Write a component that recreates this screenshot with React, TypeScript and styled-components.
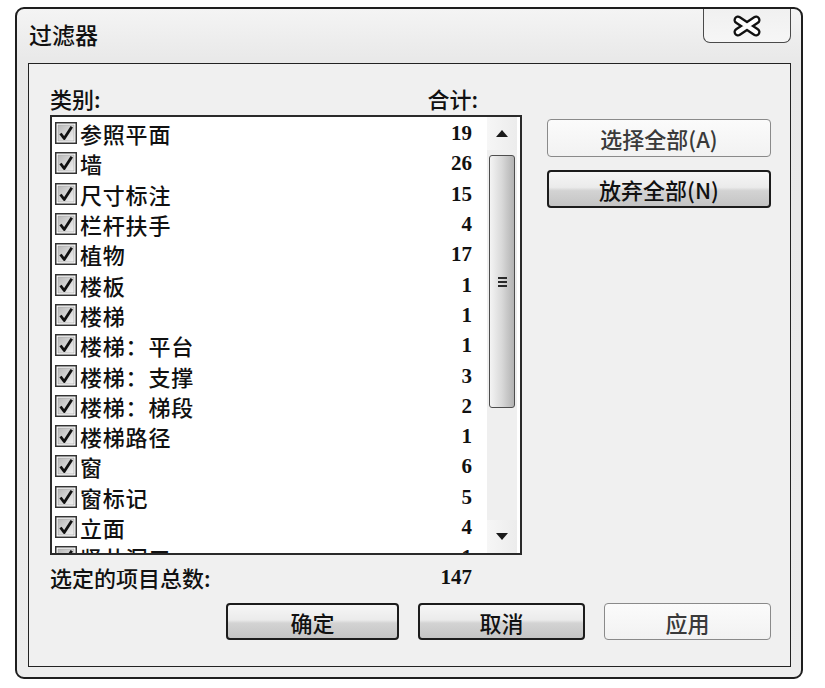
import React from 'react'
import styled, { createGlobalStyle } from 'styled-components'

const GlobalStyle = createGlobalStyle`
  html, body {
    margin: 0;
    padding: 0;
    background: #ffffff;
  }
  body {
    font-family: "Noto Sans CJK SC", "Noto Sans", sans-serif;
    color: #111;
  }
`

const Page = styled.div`
  width: 825px;
  height: 688px;
  box-sizing: border-box;
  padding: 7px 0 0 15px;
`

const Window = styled.div`
  width: 788px;
  height: 672px;
  box-sizing: border-box;
  border: 2px solid #1e1e1e;
  border-radius: 9px;
  background: linear-gradient(#f4f4f4, #e8e8e8 54px, #ececec);
  display: flex;
  flex-direction: column;
`

const TitleBar = styled.div`
  height: 54px;
  flex-shrink: 0;
  display: flex;
  justify-content: space-between;
  align-items: flex-start;
  padding: 0 10px 0 12px;
`

const Title = styled.div`
  margin-top: 10px;
  font-size: 23px;
  line-height: 30px;
  font-weight: 500;
`

const CloseButton = styled.div`
  width: 88px;
  height: 34px;
  box-sizing: border-box;
  border: 1.5px solid #4a4a4a;
  border-top: none;
  border-radius: 0 0 7px 7px;
  background: linear-gradient(#f0f0f0, #f6f6f6);
  display: flex;
  align-items: center;
  justify-content: center;
`

const Panel = styled.div`
  flex: 1;
  margin: 0 10px 10px 11px;
  border: 1.5px solid #222;
  background: #f0f0f0;
  padding: 16px 19px 26px 21px;
  display: flex;
  flex-direction: column;
`

const Main = styled.div`
  display: grid;
  grid-template-columns: 472px 224px;
  justify-content: space-between;
`

const LeftCol = styled.div`
  display: flex;
  flex-direction: column;
`

const Header = styled.div`
  height: 35px;
  display: flex;
  align-items: center;
  justify-content: space-between;
  padding-right: 44px;
  font-size: 22px;
  font-weight: 500;
`

const ListBox = styled.div`
  height: 440px;
  box-sizing: border-box;
  border: 2px solid #2a2a2a;
  background: #fff;
  display: flex;
`

const Rows = styled.div`
  flex: 1;
  overflow: hidden;
  padding: 1px 0 0 3px;
`

const Row = styled.div`
  height: 30.3px;
  display: flex;
  align-items: center;
  gap: 3px;
`

const Label = styled.span`
  flex: 1;
  font-size: 22px;
  letter-spacing: 0.8px;
  line-height: 28px;
  font-weight: 500;
  white-space: nowrap;
`

const Count = styled.span`
  font-family: "Liberation Serif", "Times New Roman", serif;
  font-weight: 700;
  font-size: 21px;
  line-height: 28px;
  padding-right: 15px;
`

const Scrollbar = styled.div`
  width: 30px;
  margin-right: 3px;
  background: #efefef;
  display: flex;
  flex-direction: column;
`

const ArrowButton = styled.div`
  height: 33px;
  display: flex;
  align-items: center;
  justify-content: center;
  background: linear-gradient(90deg, #f6f6f6, #ececec);
`

const Thumb = styled.div`
  margin: 5px 2px 0;
  height: 253px;
  box-sizing: border-box;
  border: 1.5px solid #4e4e4e;
  border-radius: 3px;
  background: linear-gradient(90deg, #f4f4f4, #d8d8d8 50%, #b2b2b2);
  display: flex;
  flex-direction: column;
  align-items: center;
  justify-content: center;
  gap: 2px;
`

const Grip = styled.div`
  width: 9px;
  height: 2px;
  background: #2a2a2a;
`

const Track = styled.div`
  flex: 1;
`

const Footer = styled.div`
  height: 44px;
  display: flex;
  align-items: center;
  justify-content: space-between;
  padding-right: 50px;
  font-size: 22px;
  font-weight: 500;
`

const Total = styled.span`
  font-family: "Liberation Serif", "Times New Roman", serif;
  font-weight: 700;
  font-size: 21px;
`

const RightCol = styled.div`
  padding-top: 39px;
  display: flex;
  flex-direction: column;
  gap: 13px;
`

const Button = styled.div<{ $primary?: boolean; $w?: number; $h?: number }>`
  width: ${(p) => p.$w ?? 224}px;
  height: ${(p) => p.$h ?? 38}px;
  box-sizing: border-box;
  border-radius: 4px;
  display: flex;
  align-items: center;
  justify-content: center;
  font-size: 22px;
  font-weight: 500;
  border: ${(p) => (p.$primary ? '2px solid #1c1c1c' : '1.5px solid #8a8a8a')};
  color: ${(p) => (p.$primary ? '#111' : '#3a3a3a')};
  background: ${(p) =>
    p.$primary
      ? 'linear-gradient(#f6f6f6 0%, #ebebeb 45%, #d3d3d3 55%, #c4c4c4 100%)'
      : 'linear-gradient(#fbfbfb, #f2f2f2)'};
`

const ButtonRow = styled.div`
  margin-top: 4px;
  display: flex;
  justify-content: flex-end;
  gap: 19px;
`

const Check = () => (
  <svg width="22" height="22" viewBox="0 0 22 22">
    <defs>
      <linearGradient id="cbg" x1="0" y1="0" x2="1" y2="1">
        <stop offset="0" stopColor="#b8b8b8" />
        <stop offset="1" stopColor="#f2f2f2" />
      </linearGradient>
    </defs>
    <rect x="0.75" y="0.75" width="20.5" height="20.5" fill="#fff" stroke="#333" strokeWidth="1.5" />
    <rect x="3" y="3" width="16" height="16" fill="url(#cbg)" stroke="#a0a0a0" strokeWidth="0.6" />
    <path d="M5.5 11.5 L9.2 16.5 L16.8 4.8" fill="none" stroke="#111" strokeWidth="2.8" strokeLinejoin="round" />
  </svg>
)

const CloseIcon = () => (
  <svg width="30" height="22" viewBox="0 0 30 22">
    <path d="M6 5 L24 17 M24 5 L6 17" stroke="#111" strokeWidth="9" strokeLinecap="round" />
    <path d="M6 5 L24 17 M24 5 L6 17" stroke="#fff" strokeWidth="4.5" strokeLinecap="round" />
  </svg>
)

const Arrow = (props: { down?: boolean }) => (
  <svg width="12" height="7" viewBox="0 0 12 7">
    <path d={props.down ? 'M0 0 H12 L6 7 Z' : 'M0 7 H12 L6 0 Z'} fill="#1a1a1a" />
  </svg>
)

const items: [string, number][] = [
  ['参照平面', 19],
  ['墙', 26],
  ['尺寸标注', 15],
  ['栏杆扶手', 4],
  ['植物', 17],
  ['楼板', 1],
  ['楼梯', 1],
  ['楼梯：平台', 1],
  ['楼梯：支撑', 3],
  ['楼梯：梯段', 2],
  ['楼梯路径', 1],
  ['窗', 6],
  ['窗标记', 5],
  ['立面', 4],
  ['竖井洞口', 1],
]

export default function App() {
  return (
    <Page>
      <GlobalStyle />
      <Window>
        <TitleBar>
          <Title>过滤器</Title>
          <CloseButton>
            <CloseIcon />
          </CloseButton>
        </TitleBar>
        <Panel>
          <Main>
            <LeftCol>
              <Header>
                <span>类别:</span>
                <span>合计:</span>
              </Header>
              <ListBox>
                <Rows>
                  {items.map(([name, n]) => (
                    <Row key={name}>
                      <Check />
                      <Label>{name}</Label>
                      <Count>{n}</Count>
                    </Row>
                  ))}
                </Rows>
                <Scrollbar>
                  <ArrowButton>
                    <Arrow />
                  </ArrowButton>
                  <Thumb>
                    <Grip />
                    <Grip />
                    <Grip />
                  </Thumb>
                  <Track />
                  <ArrowButton>
                    <Arrow down />
                  </ArrowButton>
                </Scrollbar>
              </ListBox>
              <Footer>
                <span>选定的项目总数:</span>
                <Total>147</Total>
              </Footer>
            </LeftCol>
            <RightCol>
              <Button>选择全部(A)</Button>
              <Button $primary>放弃全部(N)</Button>
            </RightCol>
          </Main>
          <ButtonRow>
            <Button $primary $w={173} $h={37}>确定</Button>
            <Button $primary $w={167} $h={37}>取消</Button>
            <Button $w={167} $h={37}>应用</Button>
          </ButtonRow>
        </Panel>
      </Window>
    </Page>
  )
}
